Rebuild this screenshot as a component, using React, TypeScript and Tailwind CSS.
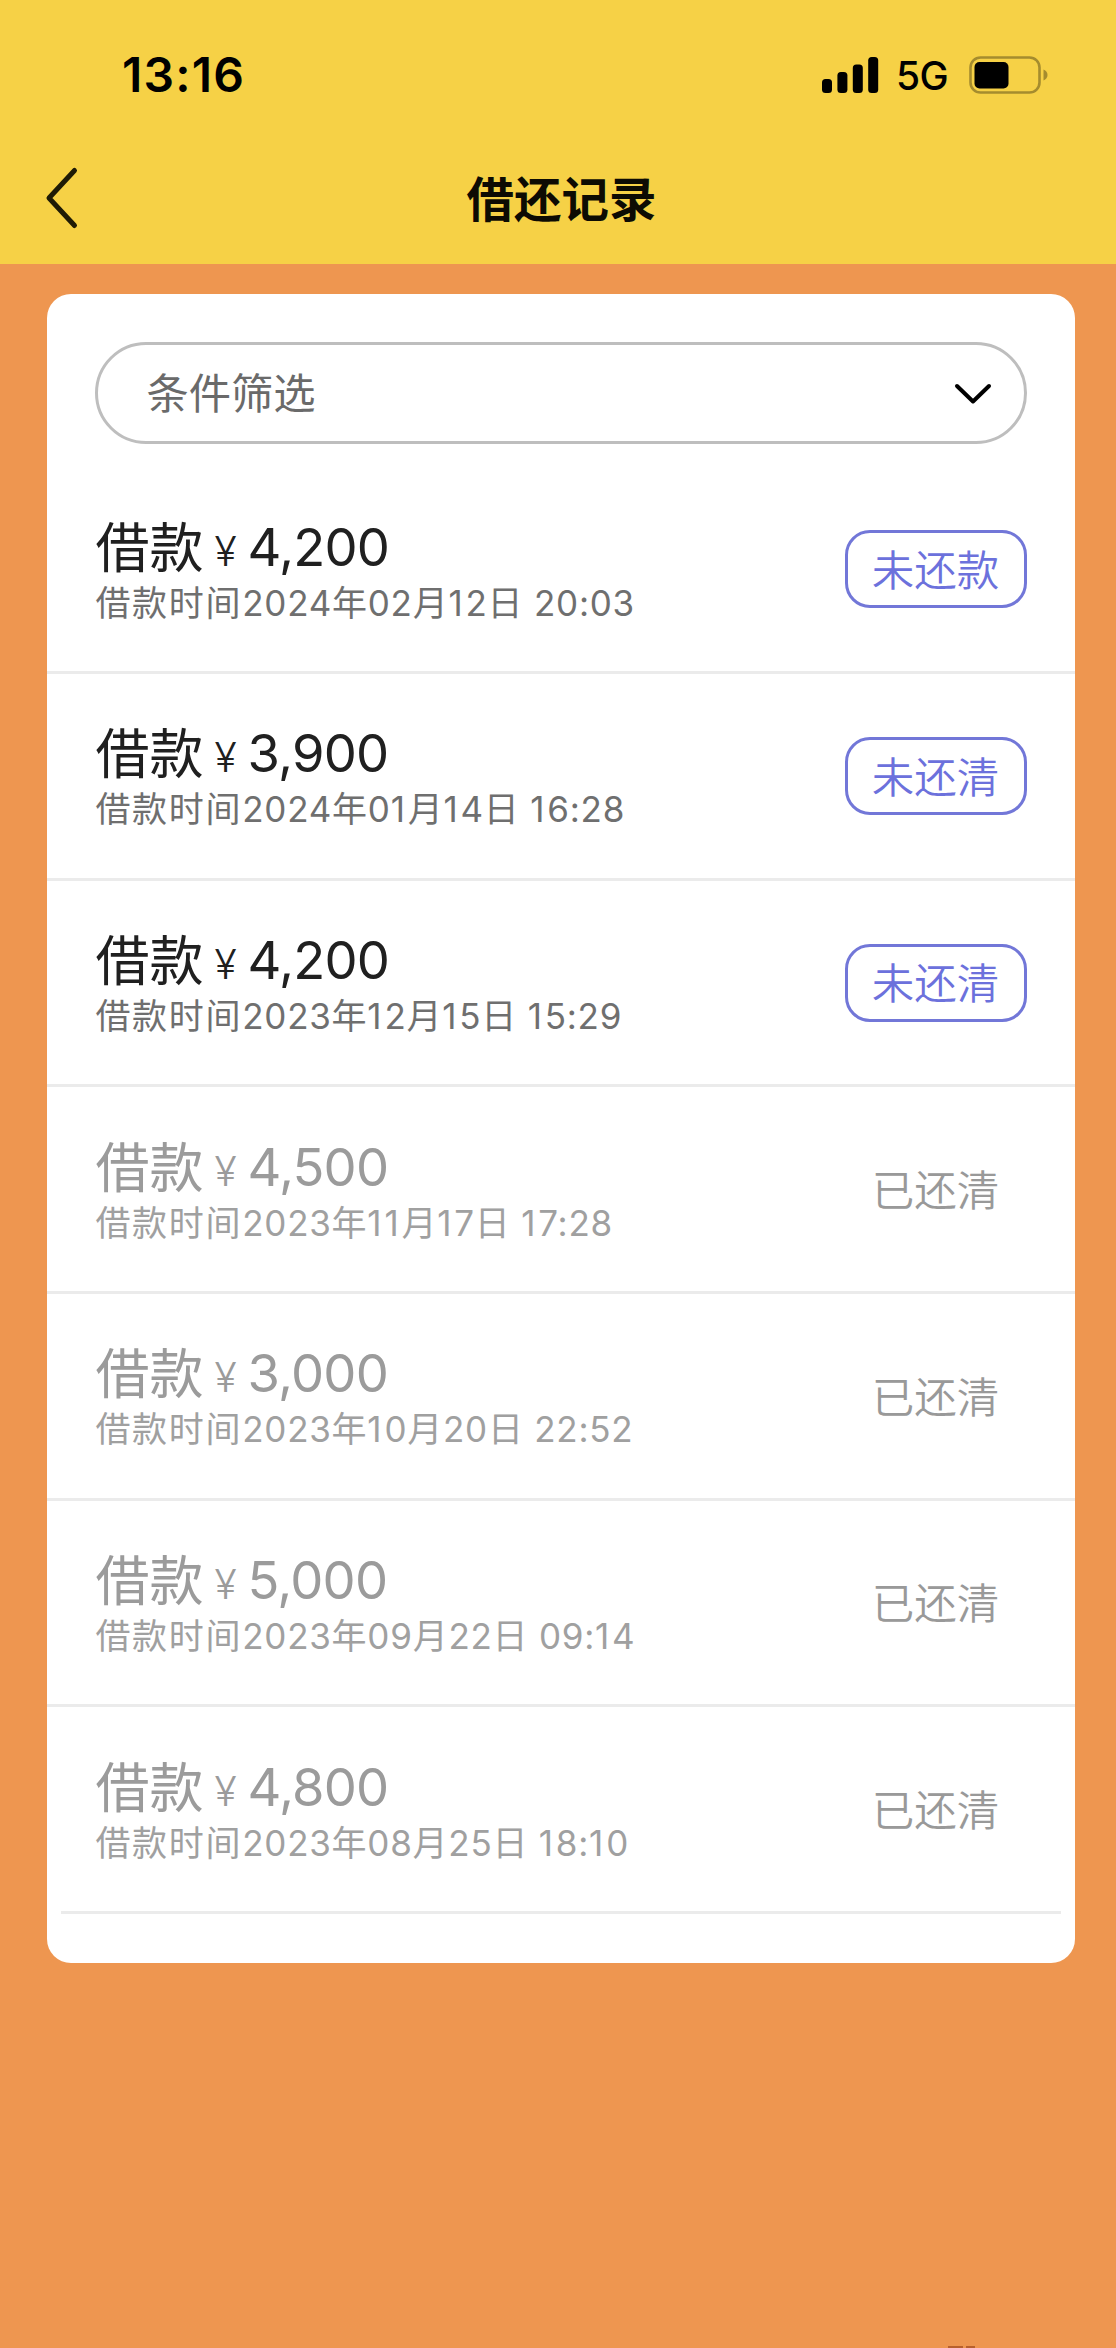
import clsx from "clsx";

type LoanStatus = "未还款" | "未还清" | "已还清";

interface LoanRecord {
    amount: string;
    time: string;
    status: LoanStatus;
}

const RECORDS: LoanRecord[] = [
    { amount: "4,200", time: "2024年02月12日 20:03", status: "未还款" },
    { amount: "3,900", time: "2024年01月14日 16:28", status: "未还清" },
    { amount: "4,200", time: "2023年12月15日 15:29", status: "未还清" },
    { amount: "4,500", time: "2023年11月17日 17:28", status: "已还清" },
    { amount: "3,000", time: "2023年10月20日 22:52", status: "已还清" },
    { amount: "5,000", time: "2023年09月22日 09:14", status: "已还清" },
    { amount: "4,800", time: "2023年08月25日 18:10", status: "已还清" },
];

function StatusBar() {
    return (
        <div className="flex h-[132px] items-start justify-between pt-[46px] pr-[68px] pl-[122px]">
            <span className="text-[48px] leading-[58px] font-semibold tracking-[1.2px] text-black">13:16</span>
            <div className="flex h-[58px] items-center">
                <svg width="57" height="36" viewBox="0 0 57 36" fill="#000">
                    <rect x="0" y="22" width="10" height="14" rx="3.5" />
                    <rect x="15.4" y="15" width="10" height="21" rx="3.5" />
                    <rect x="30.8" y="7.5" width="10" height="28.5" rx="3.5" />
                    <rect x="46.2" y="0" width="10" height="36" rx="3.5" />
                </svg>
                <span className="ml-[17px] w-[55px] pt-[3px] text-[39px] font-medium tracking-[-0.5px] text-black">5G</span>
                <svg className="ml-[18px]" width="79" height="38" viewBox="0 0 79 38">
                    <rect x="1.5" y="1.5" width="69" height="35" rx="10" fill="none" stroke="#a58c2e" strokeWidth="2.6" />
                    <rect x="5.5" y="6" width="34" height="26.5" rx="5" fill="#000" />
                    <path d="M74.5 13.5c2.6 1 4 3 4 5.5s-1.4 4.5-4 5.5z" fill="#a58c2e" />
                </svg>
            </div>
        </div>
    );
}

function NavBar() {
    return (
        <div className="grid h-[132px] grid-cols-[1fr_auto_1fr] items-center pr-[37px] pl-[44px]">
            <svg width="36" height="64" viewBox="0 0 36 64" fill="none" stroke="#1f1b05" strokeWidth="5" strokeLinecap="round" strokeLinejoin="round">
                <path d="M30.5 4.5 5 32l25.5 27.5" />
            </svg>
            <h1 className="pt-[3px] text-[47.5px] leading-[60px] font-semibold text-[#0d0b03]">借还记录</h1>
            <span />
        </div>
    );
}

function FilterSelect() {
    return (
        <button
            type="button"
            className="mx-12 flex h-[102px] items-center justify-between rounded-full border-3 border-[#bebebe] pr-[32px] pl-[48px]"
        >
            <span className="pt-[3px] text-[42.3px] leading-[60px] text-[#6a6a6a]">条件筛选</span>
            <svg className="mt-[2px]" width="38" height="22" viewBox="0 0 38 22" fill="none" stroke="#000" strokeWidth="4" strokeLinecap="round" strokeLinejoin="round">
                <path d="M3 3l16 15.5L35 3" />
            </svg>
        </button>
    );
}

// the digit 1 is set a little wider so that dates line up more evenly
function RecordTime({ time }: { time: string }) {
    return (
        <span className="tracking-[0.75px]">
            {time.split(/(1)/).map((part, i) =>
                part === "1" ? (
                    <span key={i} className="tracking-[2.8px]">
                        1
                    </span>
                ) : (
                    part
                ),
            )}
        </span>
    );
}

function RecordRow({ record, last }: { record: LoanRecord; last: boolean }) {
    const settled = record.status === "已还清";

    return (
        <li className="flex h-[206.67px] flex-col">
            <div className="flex flex-1 items-center justify-between px-12">
                <div className="pt-[7px]">
                    <p className={clsx("flex items-baseline leading-[60px]", settled ? "text-[#9b9b9b]" : "text-[#202020]")}>
                        <span className="text-[54px]">借款</span>
                        <span className="mb-[2px] ml-[11px] -translate-y-[2px] text-[41px] font-[350]">¥</span>
                        <span className="ml-[11px] -translate-y-[2px] text-[52.5px] tracking-[-0.8px]">{record.amount}</span>
                    </p>
                    <p className={clsx("-mt-[6px] text-[35px] leading-[48px] whitespace-nowrap", settled ? "text-[#a0a0a0]" : "text-[#6f6f6f]")}>
                        <span className="tracking-[1.7px]">借款时间</span>
                        <RecordTime time={record.time} />
                    </p>
                </div>
                <span
                    className={clsx(
                        "flex h-[78px] w-[182px] items-center justify-center rounded-[25px] border-3 pt-[3px] pr-[2px] text-[42.5px] font-[350]",
                        settled ? "border-transparent text-[#999999]" : "border-[#7277d8] text-[#6c71dc]",
                    )}
                >
                    {record.status}
                </span>
            </div>
            <div className={clsx("h-[3px] shrink-0 bg-[#ebebeb]", last && "mx-[14px]")} />
        </li>
    );
}

export default function App() {
    return (
        <div className="flex h-[2348px] w-[1116px] flex-col overflow-hidden bg-[#ee9650] font-['Inter','Noto_Sans_CJK_SC',sans-serif]">
            <header className="h-[264px] shrink-0 bg-[#f6d146]">
                <StatusBar />
                <NavBar />
            </header>
            <main className="ml-[47.4px] mt-[29.5px] flex h-[1669px] w-[1028px] flex-col rounded-3xl bg-white pt-[48px]">
                <FilterSelect />
                <ul className="mt-[24px]">
                    {RECORDS.map((record, i) => (
                        <RecordRow key={record.time} record={record} last={i === RECORDS.length - 1} />
                    ))}
                </ul>
            </main>
            <div className="mt-auto ml-[948px] flex gap-[3px]">
                <span className="h-[2px] w-[15px] bg-[#b8602c]" />
                <span className="h-[2px] w-[9px] bg-[#b8602c]" />
            </div>
        </div>
    );
}
